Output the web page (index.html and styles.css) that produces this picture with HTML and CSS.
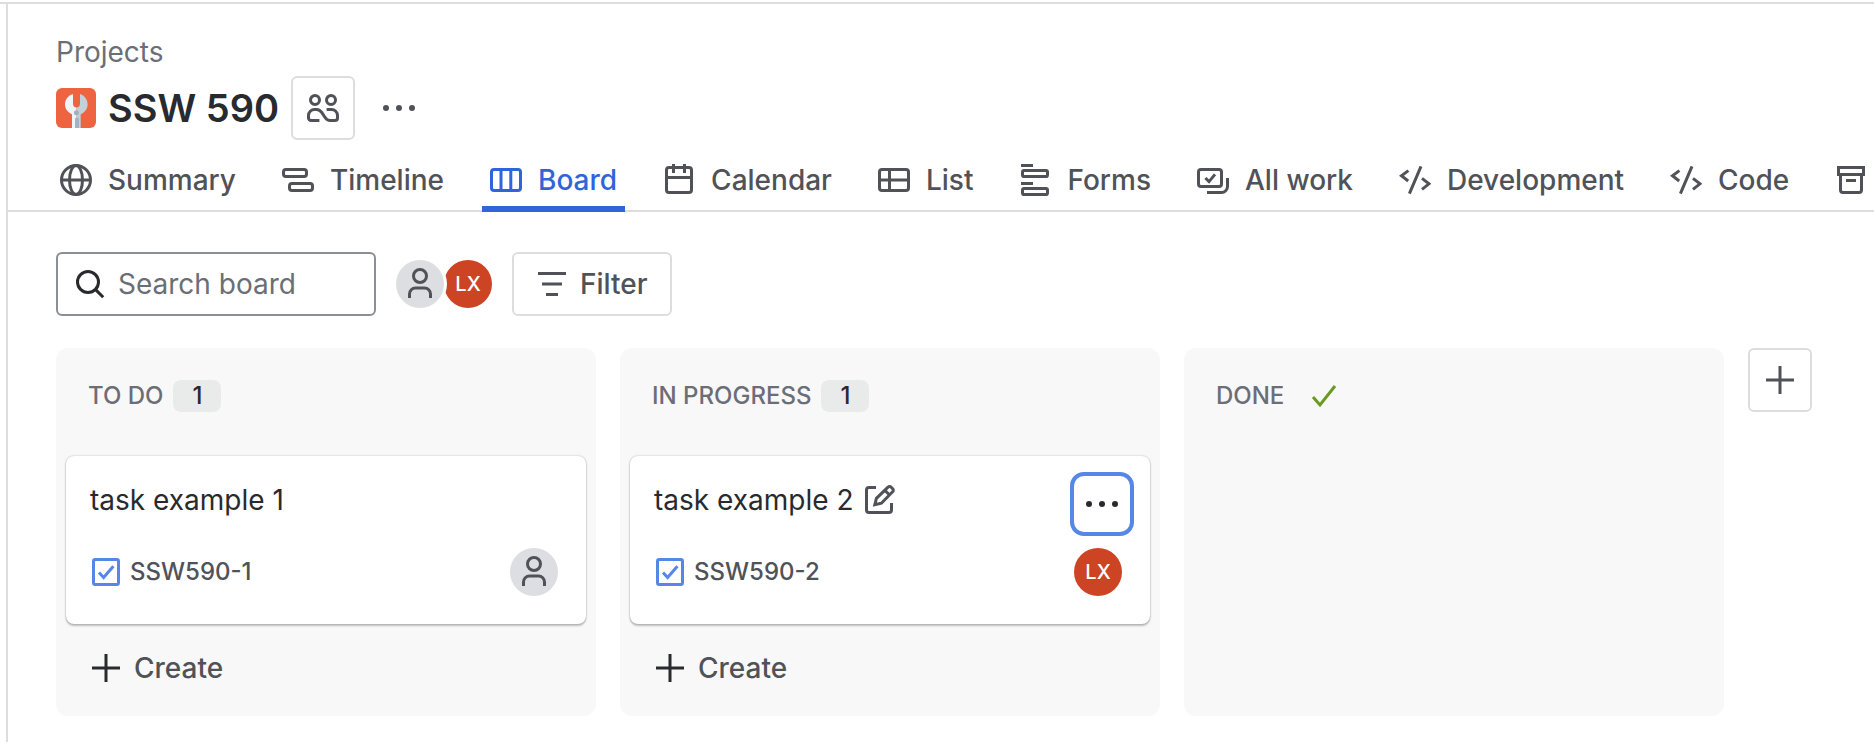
FILE: index.html
```html
<!DOCTYPE html>
<html lang="en">
<head>
<meta charset="utf-8">
<meta name="viewport" content="width=device-width, initial-scale=1">
<title>SSW 590 - Board</title>
<link rel="stylesheet" href="styles.css">
</head>
<body>
<svg class="sprite" aria-hidden="true">
  <symbol id="plus" viewBox="0 0 16 16"><path d="M8 1v14M1 8h14"/></symbol>
  <symbol id="code" viewBox="0 0 16 16"><path d="M4.7 3.3 1.2 5.9l3.4 2.6M11 1.2 5.2 14.8M11.5 7.2 15 9.9l-3.5 2.8"/></symbol>
  <symbol id="more" viewBox="0 0 16 16"><g fill="currentColor" stroke="none"><circle cx="1.5" cy="8" r="1.5"/><circle cx="8" cy="8" r="1.5"/><circle cx="14.5" cy="8" r="1.5"/></g></symbol>
  <symbol id="person" viewBox="0 0 16 16"><circle cx="8" cy="4" r="3.25"/><path d="M2.75 15v-2a3 3 0 0 1 3-3h4.5a3 3 0 0 1 3 3v2"/></symbol>
  <symbol id="task" viewBox="0 0 16 16"><rect x="1.75" y="1.75" width="12.5" height="12.5" rx=".9"/><path d="m4.5 8.3 2.3 2.5 4.9-5.7"/></symbol>
</svg>
<main class="page">
  <header class="head">
    <nav class="crumbs" aria-label="Breadcrumb"><a href="#">Projects</a></nav>
    <div class="title-row">
      <svg class="project-logo" viewBox="0 0 40 40" aria-hidden="true">
        <rect width="40" height="40" rx="6" fill="#ee6340"/>
        <path d="M17 6C12 7.600 9 11.600 9 16.300c0 4.700 2.800 8.200 7 10V40h4.500V19.500c-2.100 0-3.500-1.500-3.500-3.700z" fill="#f1f4f6"/>
        <path d="M24 6c4.700 1.600 7.600 5.600 7.600 10.300 0 4.700-2.700 8.200-6.900 10V40h-4.200V19.500c2.100 0 3.500-1.500 3.500-3.700z" fill="#c4d0d8"/>
        <circle cx="20.400" cy="24.700" r="2.500" fill="#9fb0be"/>
        <path d="M19 40v-8.500a1.900 1.900 0 0 1 4 0V40z" fill="#9fb3c4"/>
      </svg>
      <h1>SSW 590</h1>
      <button class="icon-button" type="button" aria-label="Team">
        <svg class="icon" viewBox="0 0 16 16"><circle cx="4" cy="4" r="2.250"/><circle cx="12" cy="4" r="2.250"/><path d="M6.200 14.250H2A1.250 1.250 0 0 1 .75 13v-1.250a3 3 0 0 1 3-3h1c1.400 0 2.100.7 2.700 1.600l1.500 2.300c.6.900 1.200 1.600 2.600 1.600H14A1.250 1.250 0 0 0 15.250 13v-1.250a3 3 0 0 0-3-3H9.800"/></svg>
      </button>
      <button class="icon-button bare" type="button" aria-label="More actions"><svg class="icon"><use href="#more"/></svg></button>
    </div>
    <nav class="tabs" aria-label="Project views">
      <a class="tab" href="#"><svg class="icon" viewBox="0 0 16 16"><circle cx="8" cy="8" r="7.250"/><ellipse cx="8" cy="8" rx="3.250" ry="7.250"/><path d="M.75 8h14.500"/></svg>Summary</a>
      <a class="tab" href="#"><svg class="icon" viewBox="0 0 16 16"><rect x=".75" y="2.750" width="11.500" height="3.500" rx="1.200"/><rect x="3.750" y="9.750" width="11.500" height="3.500" rx="1.200"/></svg>Timeline</a>
      <a class="tab active" href="#" aria-current="page"><svg class="icon" viewBox="0 0 16 16"><rect x=".75" y="2.750" width="14.500" height="10.500" rx="1.250"/><path d="M5.500 3v10M10.400 3v10"/></svg>Board</a>
      <a class="tab" href="#"><svg class="icon" viewBox="0 0 16 16"><rect x="1.750" y="1.750" width="12.500" height="12.500" rx="1.250"/><path d="M2 6.750h12M5.250 0v4.500M10.750 0v4.500"/></svg>Calendar</a>
      <a class="tab" href="#"><svg class="icon" viewBox="0 0 16 16"><rect x=".75" y="2.750" width="14.500" height="10.500" rx="1.250"/><path d="M5.750 3v10M1 8h14"/></svg>List</a>
      <a class="tab" href="#"><svg class="icon" viewBox="0 0 16 16"><path d="M1 .75h6M1 9.750h6"/><rect x="1.750" y="3.250" width="12.500" height="3" rx=".8"/><rect x="1.750" y="12.250" width="12.500" height="3" rx=".8"/></svg>Forms</a>
      <a class="tab" href="#"><svg class="icon" viewBox="0 0 16 16"><rect x=".75" y="2.750" width="11.500" height="8.500" rx="1.250"/><path d="m4.200 7 1.800 1.800 3-3.600M5 14.250h7.250a3 3 0 0 0 3-3V7"/></svg>All work</a>
      <a class="tab" href="#"><svg class="icon"><use href="#code"/></svg>Development</a>
      <a class="tab" href="#"><svg class="icon"><use href="#code"/></svg>Code</a>
      <a class="tab" href="#" aria-label="Archived work"><svg class="icon" viewBox="0 0 16 16"><path d="M1.750 1.750h12.500v3.500H1.750zM2.750 5.500V13c0 .7.550 1.250 1.250 1.250h8c.7 0 1.250-.55 1.250-1.250V5.500M5.500 8.250h5"/></svg></a>
    </nav>
  </header>

  <section class="toolbar" aria-label="Board tools">
    <label class="search">
      <svg class="icon" viewBox="0 0 16 16"><circle cx="7" cy="7" r="5.250"/><path d="m10.800 10.800 3.800 3.800"/></svg>
      <input type="text" placeholder="Search board" aria-label="Search board">
    </label>
    <div class="people">
      <button class="avatar unassigned" type="button" aria-label="Unassigned"><svg class="icon"><use href="#person"/></svg></button>
      <button class="avatar user" type="button">LX</button>
    </div>
    <button class="filter" type="button"><svg class="icon" viewBox="0 0 16 16"><path d="M1 2.750h14M3 8h10M5 13.250h6"/></svg>Filter</button>
  </section>

  <section class="board" aria-label="Board">
    <section class="column">
      <h2>TO DO <span class="count">1</span></h2>
      <article class="card">
        <div class="card-title"><span>task example 1</span></div>
        <div class="card-foot">
          <a class="key" href="#"><svg class="icon"><use href="#task"/></svg>SSW590-1</a>
          <button class="avatar unassigned" type="button" aria-label="Unassigned"><svg class="icon"><use href="#person"/></svg></button>
        </div>
      </article>
      <button class="create" type="button"><svg class="icon"><use href="#plus"/></svg>Create</button>
    </section>
    <section class="column">
      <h2>IN PROGRESS <span class="count">1</span></h2>
      <article class="card">
        <div class="card-title"><span>task example 2</span>
          <button class="edit" type="button" aria-label="Edit summary"><svg class="icon" viewBox="0 0 16 16"><path d="M6.500 1.750H3c-.7 0-1.250.55-1.250 1.250v10c0 .7.550 1.250 1.250 1.250h10c.7 0 1.250-.55 1.250-1.250V9.500M5.900 10.400l.8-3.200 5.800-5.600a1.100 1.100 0 0 1 1.600 0l.7.7a1.100 1.100 0 0 1 0 1.600L9.200 9.600zM10.900 3.100l2.400 2.400"/></svg></button>
        </div>
        <button class="card-menu" type="button" aria-label="Card actions"><svg class="icon"><use href="#more"/></svg></button>
        <div class="card-foot">
          <a class="key" href="#"><svg class="icon"><use href="#task"/></svg>SSW590-2</a>
          <button class="avatar user" type="button">LX</button>
        </div>
      </article>
      <button class="create" type="button"><svg class="icon"><use href="#plus"/></svg>Create</button>
    </section>
    <section class="column">
      <h2>DONE <svg class="icon done" viewBox="0 0 16 16"><path d="m2.500 8.500 3.500 4 7.500-9.500"/></svg></h2>
    </section>
    <button class="icon-button" type="button" aria-label="Create column"><svg class="icon"><use href="#plus"/></svg></button>
  </section>
</main>
</body>
</html>
```
FILE: styles.css
```css
* {
  box-sizing: border-box;
}

html {
  background: #fff;
}

body {
  margin: 0;
  padding-top: 2px;
  color: #292a2e;
  font: 400 28px/40px Inter, "Liberation Sans", sans-serif;
  overflow-x: hidden;
}

button,
input {
  margin: 0;
  padding: 0;
  border: 0;
  background: none;
  color: inherit;
  font: inherit;
}

a {
  color: inherit;
  text-decoration: none;
}

.sprite {
  display: none;
}

.icon {
  flex: none;
  width: 32px;
  height: 32px;
  fill: none;
  stroke: currentColor;
  stroke-width: 1.5;
}

.page {
  min-height: calc(100vh - 2px);
  padding-left: 8px;
  border-top: 2px solid #dddddf;
  background: linear-gradient(#dddddf, #dddddf) 6px 0 / 2px 100% no-repeat;
}

.head {
  padding: 28px 0 0 48px;
  border-bottom: 2px solid #dddddf;
}

.crumbs {
  color: #6b6e76;
}

.title-row {
  display: flex;
  align-items: center;
  gap: 12px;
  margin-top: 4px;
}

.project-logo {
  width: 40px;
  height: 40px;
}

h1 {
  margin: 0;
  font-size: 38px;
  font-weight: 600;
  line-height: 48px;
}

.icon-button {
  display: flex;
  flex: none;
  align-items: center;
  justify-content: center;
  width: 64px;
  height: 64px;
  border: 2px solid #dddddf;
  border-radius: 6px;
  color: #505258;
}

.icon-button.bare {
  border-color: transparent;
}

.tabs {
  display: flex;
  gap: 30px;
  margin: 8px 0 -2px -4px;
  overflow: hidden;
}

.tab {
  display: flex;
  flex: none;
  align-items: center;
  gap: 16px;
  height: 64px;
  padding: 6px 8px 0;
  border-bottom: 6px solid transparent;
  color: #505258;
  font-weight: 500;
  white-space: nowrap;
}

.tab.active {
  border-bottom-color: #2f65d9;
  color: #2f65d9;
}

.toolbar {
  display: flex;
  align-items: center;
  gap: 20px;
  padding: 40px 48px 32px;
}

.search {
  display: flex;
  align-items: center;
  gap: 12px;
  width: 320px;
  height: 64px;
  padding: 0 16px;
  border: 2px solid #8c8f97;
  border-radius: 6px;
}

.search input {
  flex: 1;
  min-width: 0;
  outline: none;
}

.search input::placeholder {
  color: #6b6e76;
  opacity: 1;
}

.people {
  display: flex;
}

.avatar {
  display: flex;
  flex: none;
  align-items: center;
  justify-content: center;
  width: 48px;
  height: 48px;
  border-radius: 50%;
}

.unassigned {
  background: #dddee1;
  color: #505258;
}

.people .unassigned {
  z-index: 1;
  box-shadow: 0 0 0 3px #fff;
}

.user {
  background: #cd4425;
  color: #fff;
  font-size: 20px;
  font-weight: 500;
}

.filter {
  display: flex;
  align-items: center;
  gap: 12px;
  height: 64px;
  padding: 0 22px;
  border: 2px solid #dddddf;
  border-radius: 6px;
  color: #505258;
  font-weight: 500;
}

.board {
  display: flex;
  align-items: flex-start;
  gap: 24px;
  padding: 0 62px 24px 48px;
}

.column {
  flex: 1;
  min-width: 0;
  max-width: 540px;
  min-height: 368px;
  padding: 32px 10px 24px;
  border-radius: 12px;
  background: #f8f8f8;
}

h2 {
  display: flex;
  align-items: center;
  gap: 10px;
  height: 32px;
  margin: 0 0 44px;
  padding-left: 22px;
  color: #6b6e76;
  font-size: 24px;
  font-weight: 500;
}

.count {
  width: 48px;
  border-radius: 8px;
  background: #e9ebeb;
  color: #292a2e;
  line-height: 32px;
  text-align: center;
}

.done {
  margin-left: 14px;
  color: #6a9a23;
}

.card {
  position: relative;
  padding: 24px;
  border-radius: 8px;
  background: #fff;
  box-shadow: 0 2px 2px rgba(30, 31, 33, 0.25), 0 0 2px rgba(30, 31, 33, 0.31);
}

.card-title {
  display: flex;
  align-items: center;
  gap: 10px;
}

.edit {
  display: flex;
  color: #505258;
}

.card-menu {
  position: absolute;
  top: 16px;
  right: 16px;
  display: flex;
  align-items: center;
  justify-content: center;
  width: 64px;
  height: 64px;
  border: 4px solid #5686e6;
  border-radius: 14px;
  background: #fff;
}

.card-foot {
  display: flex;
  align-items: center;
  justify-content: space-between;
  margin-top: 28px;
  padding: 0 4px 4px 0;
}

.key {
  display: flex;
  align-items: center;
  gap: 8px;
  color: #505258;
  font-size: 24px;
  font-weight: 500;
}

.key .icon {
  color: #5686e6;
}

.create {
  display: flex;
  align-items: center;
  gap: 12px;
  margin-top: 24px;
  padding-left: 24px;
  color: #505258;
  font-weight: 500;
}

.create .icon {
  color: #292a2e;
}
```
